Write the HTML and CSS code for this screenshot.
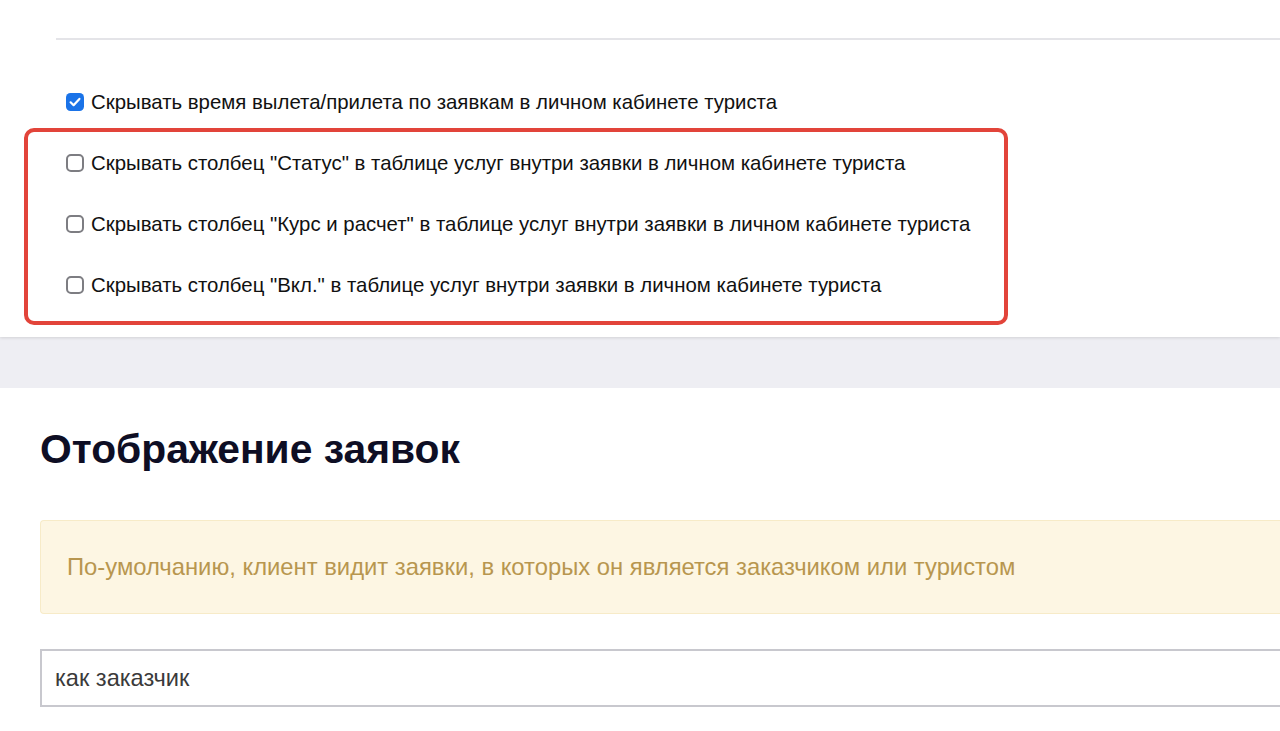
FILE: index.html
```html
<!DOCTYPE html>
<html lang="ru">
<head>
<meta charset="utf-8">
<title>Настройки</title>
<link rel="stylesheet" href="styles.css">
</head>
<body>
<section class="card">
  <div class="divider"></div>
  <div class="option option-top">
    <span class="cb cb-checked">
      <svg viewBox="0 0 18 18" width="18" height="18"><rect x="0" y="0" width="18" height="18" rx="4.5" fill="#1a73e8"/><path d="M4.6 9.3 L7.6 12.2 L13.4 5.9" fill="none" stroke="#fff" stroke-width="2.2" stroke-linecap="round" stroke-linejoin="round"/></svg>
    </span>
    <span class="label">Скрывать время вылета/прилета по заявкам в личном кабинете туриста</span>
  </div>
  <div class="highlight">
    <div class="option"><span class="cb"></span><span class="label">Скрывать столбец "Статус" в таблице услуг внутри заявки в личном кабинете туриста</span></div>
    <div class="option"><span class="cb"></span><span class="label">Скрывать столбец "Курс и расчет" в таблице услуг внутри заявки в личном кабинете туриста</span></div>
    <div class="option"><span class="cb"></span><span class="label">Скрывать столбец "Вкл." в таблице услуг внутри заявки в личном кабинете туриста</span></div>
  </div>
</section>
<div class="gap"></div>
<section class="panel">
  <h2 class="title">Отображение заявок</h2>
  <div class="alert">По-умолчанию, клиент видит заявки, в которых он является заказчиком или туристом</div>
  <div class="select">как заказчик</div>
</section>
</body>
</html>
```
FILE: styles.css
```css
html, body {
  margin: 0;
  padding: 0;
}
body {
  background: #eeeef3;
  font-family: "Liberation Sans", Arial, Helvetica, sans-serif;
  color: #111;
  overflow: hidden;
  height: 731px;
}
.card {
  background: #fff;
  height: 337px;
  box-sizing: border-box;
  padding-top: 38px;
  box-shadow: 0 1px 3px rgba(0,0,0,0.12);
  position: relative;
}
.divider {
  margin-left: 56px;
  height: 2px;
  background: #e4e4e8;
}
.option {
  display: flex;
  align-items: center;
  height: 30px;
  font-size: 20.4px;
  color: #111;
  white-space: nowrap;
}
.option-top {
  margin-top: 47px;
  padding-left: 66px;
}
.cb {
  width: 18px;
  height: 18px;
  box-sizing: border-box;
  border: 2px solid #7d7d82;
  border-radius: 5px;
  margin-right: 7px;
  flex: none;
}
.cb-checked {
  border: none;
  display: block;
}
.cb-checked svg {
  display: block;
}
.highlight {
  margin: 11px 0 0 24px;
  width: 984px;
  box-sizing: border-box;
  border: 4px solid #e2443a;
  border-radius: 10px;
  padding: 16px 0 21px 38px;
  display: flex;
  flex-direction: column;
  gap: 31px;
}
.gap {
  height: 51px;
}
.panel {
  background: #fff;
  padding: 36px 0 0 40px;
  height: 343px;
  box-sizing: border-box;
}
.title {
  margin: 0;
  font-size: 40.8px;
  font-weight: bold;
  color: #0e0e24;
  line-height: 50px;
}
.alert {
  margin-top: 46px;
  height: 94px;
  box-sizing: border-box;
  background: #fdf6e3;
  border: 1px solid #f7ebc8;
  border-right: none;
  border-radius: 4px 0 0 4px;
  color: #b8964f;
  font-size: 23.8px;
  display: flex;
  align-items: center;
  padding-left: 26px;
  white-space: nowrap;
}
.select {
  margin-top: 35px;
  height: 58px;
  box-sizing: border-box;
  border: 2px solid #c8c8ce;
  border-right: none;
  color: #3a3a3a;
  font-size: 23.6px;
  display: flex;
  align-items: center;
  padding-left: 13px;
}
```
